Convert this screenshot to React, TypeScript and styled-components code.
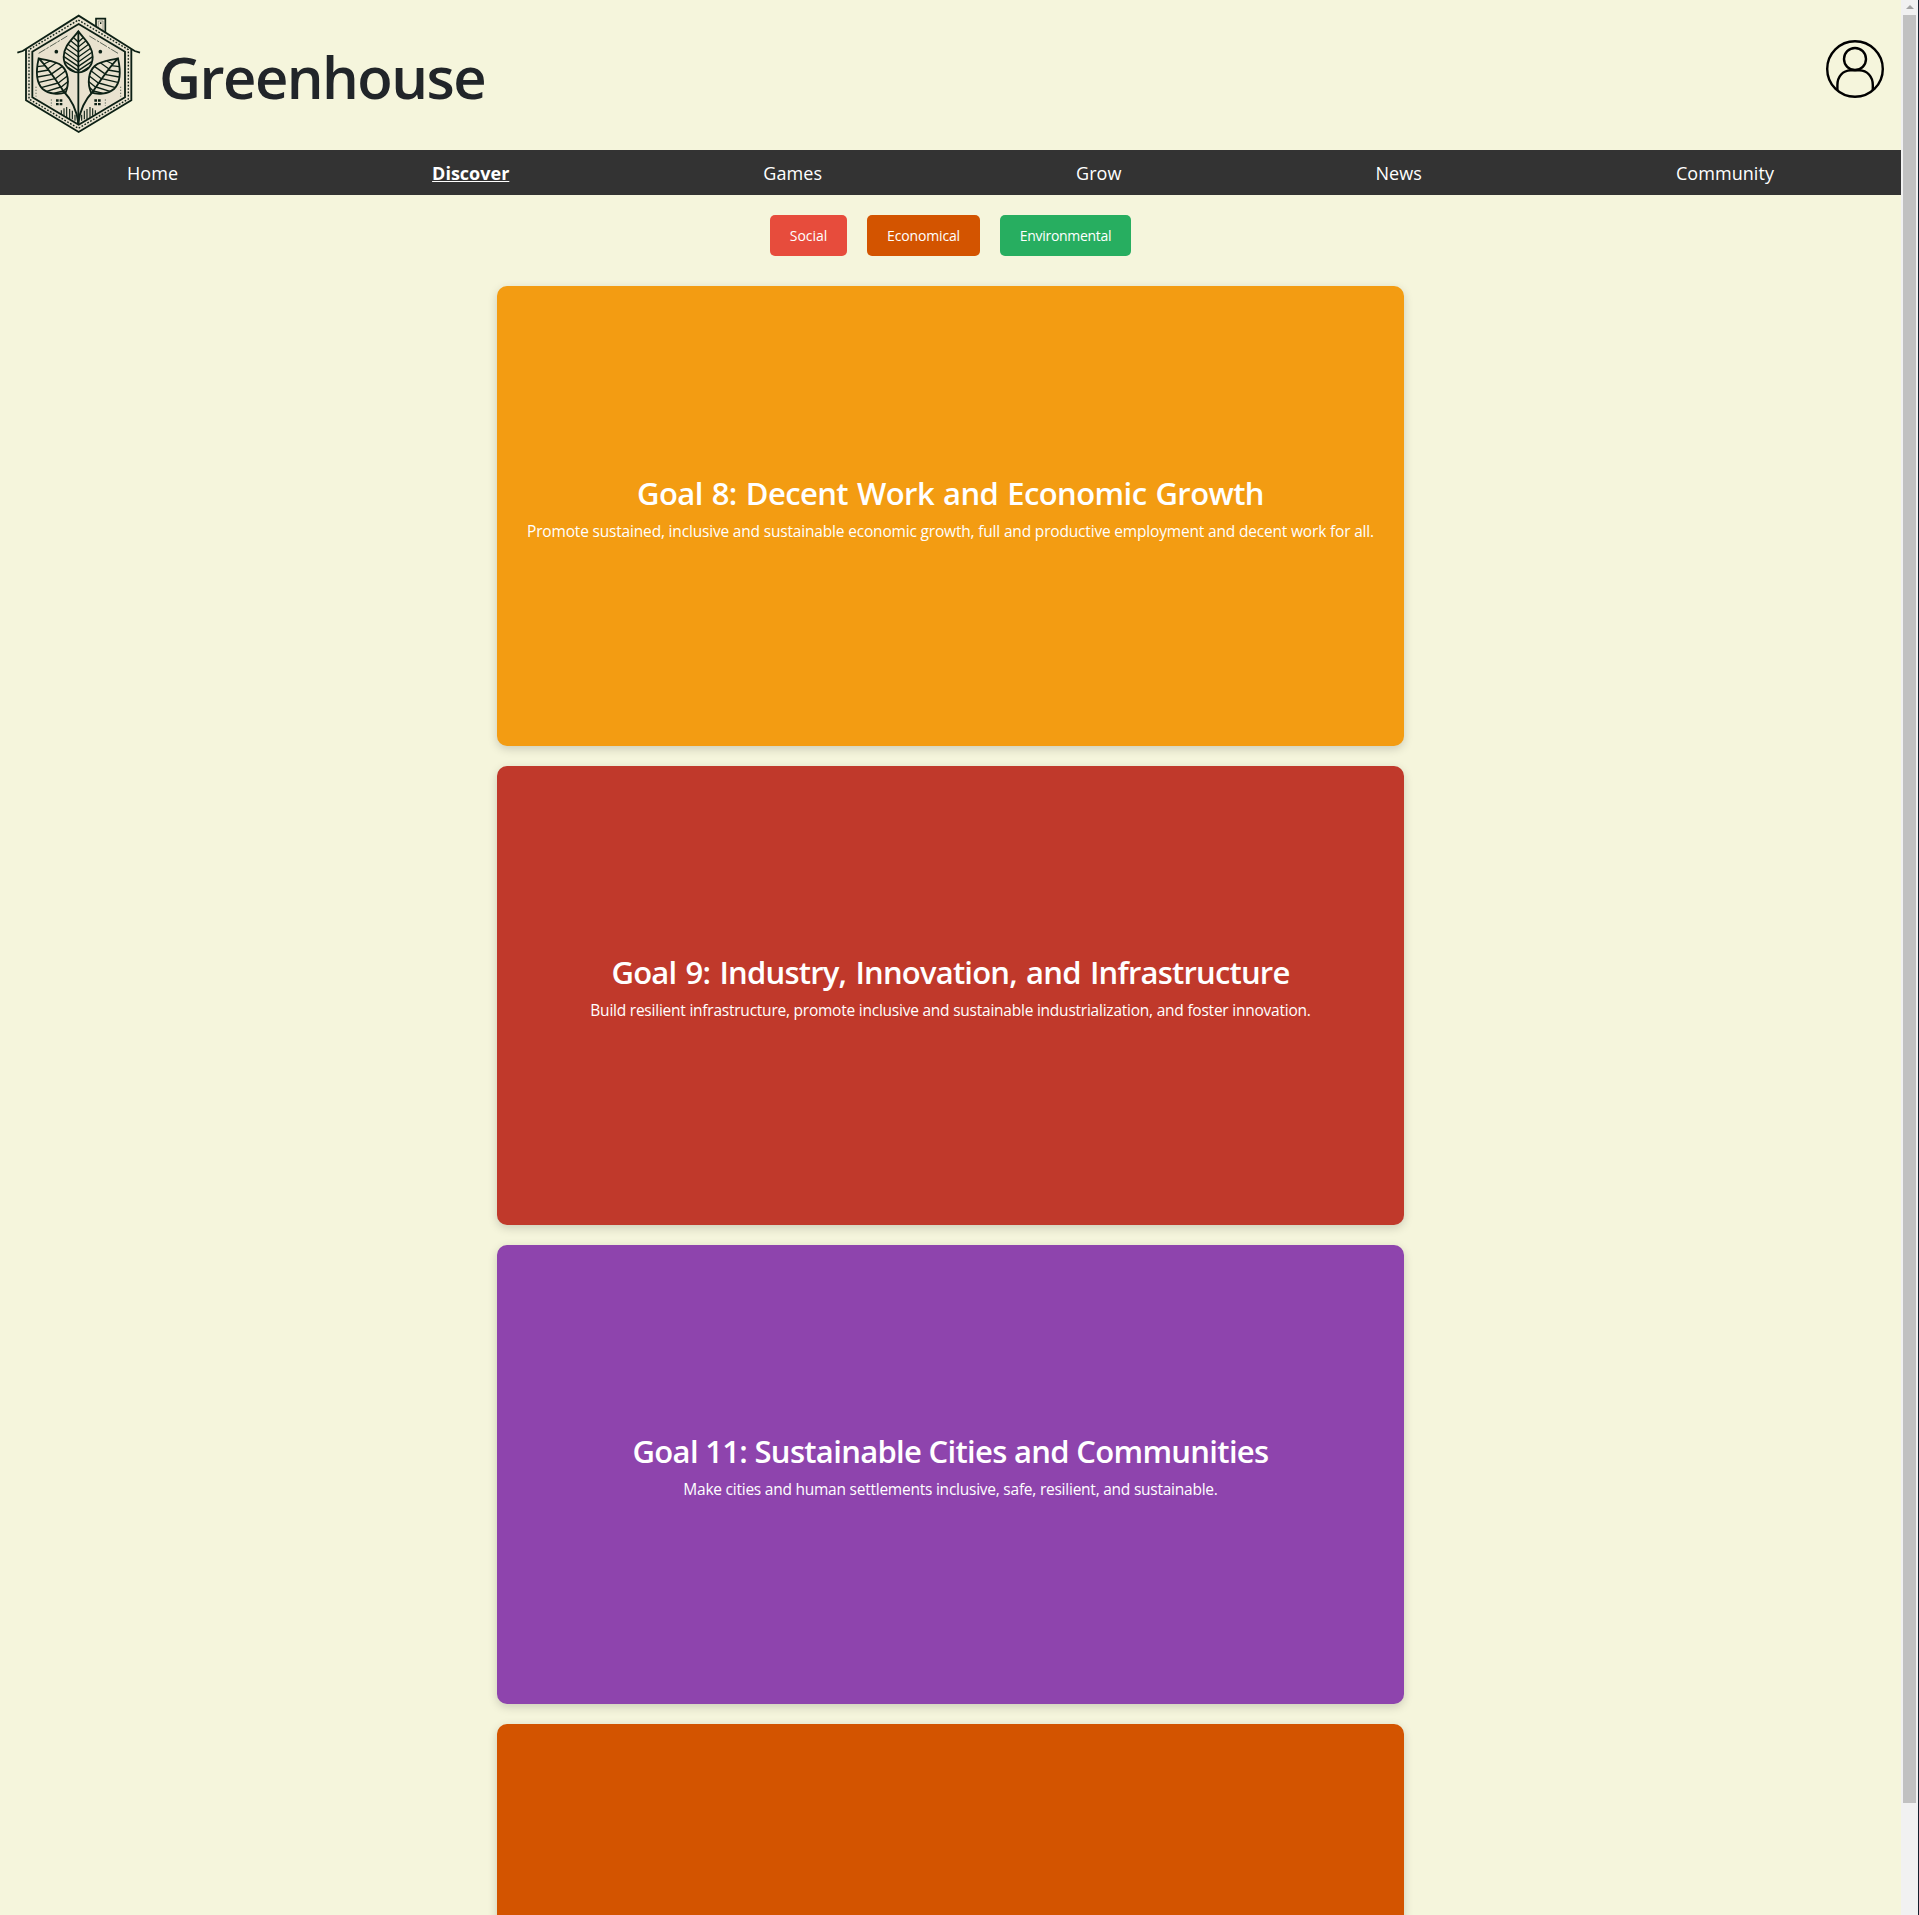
import React from 'react';
import styled, { createGlobalStyle } from 'styled-components';

const INK = '#0c2015';

const GlobalStyle = createGlobalStyle`
  * { box-sizing: border-box; }
  html, body { margin: 0; padding: 0; height: 100%; overflow: hidden; }
  body {
    background: #f5f5dc;
    color: #212529;
    font-family: "Open Sans", "Noto Sans", sans-serif;
    font-size: 16px;
    line-height: 1.5;
  }
`;

const Window = styled.div`
  display: flex;
  height: 1915px;
  overflow: hidden;
`;

const Page = styled.div`
  flex: 1;
  min-width: 0;
  height: 100%;
  overflow: hidden;
`;

const Header = styled.header`
  display: flex;
  align-items: flex-start;
  height: 150px;
  padding-right: 16px;
`;

const LogoSvg = styled.svg`
  display: block;
  width: 150px;
  height: 150px;
  flex: none;
`;

const Title = styled.h1`
  flex: 1;
  margin: 42px 0 0 9px;
  font-size: 58px;
  font-weight: 600;
  line-height: 70px;
  letter-spacing: -1.55px;
`;

const ProfileSvg = styled.svg`
  display: block;
  width: 60px;
  height: 60px;
  margin-top: 39px;
  fill: none;
  stroke: #000;
  stroke-width: 2.4;
`;

const Nav = styled.nav`
  display: flex;
  justify-content: space-around;
  align-items: center;
  height: 45px;
  padding-top: 1px;
  background: #333;
`;

const NavLink = styled.a<{ $active?: boolean }>`
  color: #fff;
  font-size: 18px;
  line-height: 27px;
  font-weight: ${(p) => (p.$active ? 700 : 400)};
  letter-spacing: ${(p) => (p.$active ? 0 : 0.06)}px;
  text-decoration: ${(p) => (p.$active ? 'underline' : 'none')};
  text-decoration-thickness: 1px;
  text-underline-offset: 1px;
  text-decoration-skip-ink: none;
`;

const Filters = styled.div`
  display: flex;
  justify-content: center;
  gap: 20px;
  padding: 20px 0 30px;
`;

const FilterButton = styled.button<{ $color: string; $width: number; $tracking: number }>`
  width: ${(p) => p.$width}px;
  height: 41px;
  padding: 0;
  border: 0;
  border-radius: 5px;
  background: ${(p) => p.$color};
  color: #fff;
  font-family: inherit;
  font-size: 14px;
  line-height: 21px;
  letter-spacing: ${(p) => p.$tracking}px;
  white-space: nowrap;
`;

const Cards = styled.main`
  display: flex;
  flex-direction: column;
  align-items: center;
  gap: 20px;
  padding-top: 0.3px;
`;

const Card = styled.section<{ $color: string }>`
  display: flex;
  flex-direction: column;
  align-items: center;
  justify-content: center;
  flex: none;
  width: 907px;
  height: 459.4px;
  border-radius: 10px;
  background: ${(p) => p.$color};
  color: #fff;
  box-shadow: 0 3px 10px rgba(0, 0, 0, 0.17);
`;

const CardTitle = styled.h2<{ $tracking: number; $wordGap: number }>`
  margin: 0 0 5.6px;
  font-size: 31px;
  font-weight: 600;
  line-height: 40.4px;
  letter-spacing: ${(p) => p.$tracking}px;
  word-spacing: ${(p) => p.$wordGap}px;
  white-space: nowrap;
`;

const CardText = styled.p<{ $tracking: number }>`
  margin: 0 0 16.8px;
  font-size: 15.5px;
  line-height: 24px;
  letter-spacing: ${(p) => p.$tracking}px;
  white-space: nowrap;
`;

const Scrollbar = styled.div`
  display: flex;
  flex-direction: column;
  align-items: center;
  flex: none;
  width: 18px;
  background: #f1f1f1;
  border-right: 1px solid #14202e;
`;

const ScrollArrow = styled.div`
  width: 0;
  height: 0;
  margin: 5px 0 6px;
  border-left: 4px solid transparent;
  border-right: 4px solid transparent;
  border-bottom: 4px solid #a3a3a3;
`;

const ScrollThumb = styled.div`
  width: 13px;
  height: 1788px;
  background: #c1c1c1;
`;

/* One half of the roof, leaf and garden; the other half is its mirror. */
const SideLeaf = () => (
  <g>
    <path d="M116 175C107 215 107 247 128 267C147 283 178 284 197 277C208 251 206 217 186 198C166 182 141 182 116 175Z" strokeWidth="5.5" />
    <path d="M116 175C143 202 168 240 190 273C215 299 231 331 235 370" strokeWidth="5.5" />
    <path
      d="M136 197L112 200M146 210L111 216M156 223L113 231M165 236L117 247M174 249L126 262M182 261L140 274M190 273L160 280M132 192L150 183M144 206L169 188M156 221L187 199M166 236L197 212M175 249L203 227M183 262L205 244M190 273L202 262"
      strokeWidth="4"
    />
    <path d="M116 160L202 108" strokeWidth="2.4" strokeDasharray="24 3 8 4" opacity=".8" />
    <circle cx="169" cy="155" r="5.5" fill={INK} stroke="none" />
    <path d="M168 298h8v7h-8zM179 298h8v7h-8zM168 309h8v7h-8zM179 309h8v7h-8z" fill={INK} stroke="none" />
    <path d="M154 298v20M108 260v30" strokeWidth="3" strokeDasharray="4 5" opacity=".6" />
    <path d="M184 331v11M192 325v22M200 321v32M209 327v30M217 332v26M225 344v18" strokeWidth="3.4" />
  </g>
);

const Logo = () => (
  <LogoSvg viewBox="0 0 450 450" fill="none" stroke={INK} strokeLinejoin="miter">
    <path d="M288 84V56H316V101" fill="#e9e2cf" strokeWidth="5" />
    <path d="M295 83V63H309V92" strokeWidth="2" opacity=".5" />
    <path d="M302 67v5" strokeWidth="4" />
    <path d="M236 47L394 145V301L236 396L78 301V145Z" fill="#e9e2cf" stroke="none" />
    <path d="M52 158L68 153L236 47L404 153L420 158" strokeWidth="5.5" />
    <path d="M78 147V301L236 396L394 301V147" strokeWidth="5.5" />
    <path d="M236 72L375 155V292L236 374L97 292V155Z" strokeWidth="5.5" />
    <path d="M235 60L385 149V297L235 385L87 297V149Z" strokeWidth="4.2" strokeDasharray="5 5" />
    <path d="M235 94C216 119 191 138 191 171C191 199 212 217 235 217C259 217 278 199 278 171C278 138 254 119 235 94Z" strokeWidth="5.5" />
    <path d="M235 94V374" strokeWidth="5.5" />
    <path
      d="M221 113L235 126L249 113M213 123L235 141L257 123M204 133L235 156L266 133M197 144L235 171L273 144M193 156L235 186L277 156M192 170L235 199L278 170M195 185L235 212L275 185M204 202L224 215M266 202L246 215"
      strokeWidth="4"
    />
    <SideLeaf />
    <g transform="translate(470 0) scale(-1 1)">
      <SideLeaf />
    </g>
  </LogoSvg>
);

const Profile = () => (
  <ProfileSvg viewBox="0 0 60 60">
    <circle cx="30" cy="30" r="27.8" />
    <circle cx="30" cy="20" r="11" />
    <path d="M12.4 51V46C12.4 37.5 18 31.4 25.5 31.4H34.5C42 31.4 47.8 37.5 47.8 46V51" />
  </ProfileSvg>
);

const links = ['Home', 'Discover', 'Games', 'Grow', 'News', 'Community'];

const filters = [
  { label: 'Social', color: '#e74c3c', width: 77, tracking: -0.05 },
  { label: 'Economical', color: '#d35400', width: 113, tracking: -0.15 },
  { label: 'Environmental', color: '#27ae60', width: 131, tracking: -0.3 },
];

const goals = [
  {
    title: 'Goal 8: Decent Work and Economic Growth',
    text: 'Promote sustained, inclusive and sustainable economic growth, full and productive employment and decent work for all.',
    color: '#f39c12',
    titleTracking: -0.58,
    wordGap: 1.5,
    textTracking: -0.18,
  },
  {
    title: 'Goal 9: Industry, Innovation, and Infrastructure',
    text: 'Build resilient infrastructure, promote inclusive and sustainable industrialization, and foster innovation.',
    color: '#c0392b',
    titleTracking: -0.8,
    wordGap: 2,
    textTracking: -0.233,
  },
  {
    title: 'Goal 11: Sustainable Cities and Communities',
    text: 'Make cities and human settlements inclusive, safe, resilient, and sustainable.',
    color: '#8e44ad',
    titleTracking: -0.68,
    wordGap: 0,
    textTracking: -0.238,
  },
];

export default function App() {
  return (
    <>
      <GlobalStyle />
      <Window>
        <Page>
          <Header>
            <Logo />
            <Title>Greenhouse</Title>
            <Profile />
          </Header>
          <Nav>
            {links.map((l) => (
              <NavLink key={l} $active={l === 'Discover'}>
                {l}
              </NavLink>
            ))}
          </Nav>
          <Filters>
            {filters.map((f) => (
              <FilterButton key={f.label} $color={f.color} $width={f.width} $tracking={f.tracking}>
                {f.label}
              </FilterButton>
            ))}
          </Filters>
          <Cards>
            {goals.map((g) => (
              <Card key={g.title} $color={g.color}>
                <CardTitle $tracking={g.titleTracking} $wordGap={g.wordGap}>
                  {g.title}
                </CardTitle>
                <CardText $tracking={g.textTracking}>{g.text}</CardText>
              </Card>
            ))}
            <Card $color="#d35400" />
          </Cards>
        </Page>
        <Scrollbar>
          <ScrollArrow />
          <ScrollThumb />
        </Scrollbar>
      </Window>
    </>
  );
}
